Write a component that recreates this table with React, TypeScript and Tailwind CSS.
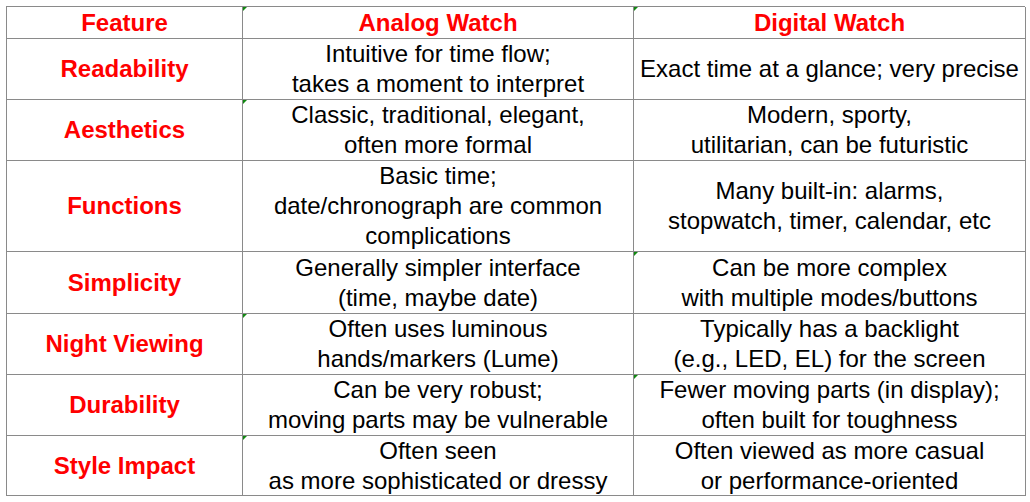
import React from 'react';

type Row = {
  feature: string;
  analog: string[];
  digital: string[];
  h: number;
  markA?: boolean;
  markD?: boolean;
};

const rows: Row[] = [
  {
    feature: 'Readability',
    analog: ['Intuitive for time flow;', 'takes a moment to interpret'],
    digital: ['Exact time at a glance; very precise'],
    h: 61,
  },
  {
    feature: 'Aesthetics',
    analog: ['Classic, traditional, elegant,', 'often more formal'],
    digital: ['Modern, sporty,', 'utilitarian, can be futuristic'],
    h: 61,
    markA: true,
  },
  {
    feature: 'Functions',
    analog: ['Basic time;', 'date/chronograph are common', 'complications'],
    digital: ['Many built-in: alarms,', 'stopwatch, timer, calendar, etc'],
    h: 91,
  },
  {
    feature: 'Simplicity',
    analog: ['Generally simpler interface', '(time, maybe date)'],
    digital: ['Can be more complex', 'with multiple modes/buttons'],
    h: 62,
    markD: true,
  },
  {
    feature: 'Night Viewing',
    analog: ['Often uses luminous', 'hands/markers (Lume)'],
    digital: ['Typically has a backlight', '(e.g., LED, EL) for the screen'],
    h: 61,
    markA: true,
  },
  {
    feature: 'Durability',
    analog: ['Can be very robust;', 'moving parts may be vulnerable'],
    digital: ['Fewer moving parts (in display);', 'often built for toughness'],
    h: 61,
    markD: true,
  },
  {
    feature: 'Style Impact',
    analog: ['Often seen', 'as more sophisticated or dressy'],
    digital: ['Often viewed as more casual', 'or performance-oriented'],
    h: 60,
    markA: true,
  },
];

// little green error triangle, like a spreadsheet
function Mark() {
  return (
    <svg className="absolute left-0 top-0" width="4" height="4" viewBox="0 0 4 4">
      <polygon points="0,0 4,0 0,4" fill="#118811" />
    </svg>
  );
}

function Cell({
  children,
  h,
  mark,
  head,
}: {
  children: React.ReactNode;
  h: number;
  mark?: boolean;
  head?: boolean;
}) {
  return (
    <div
      className={`relative flex flex-col items-center justify-center border-r border-b border-[#8a8a8a] text-center leading-[30px] text-[24px] ${
        head ? 'font-bold text-[#ff0000]' : 'text-black'
      }`}
      style={{ height: h }}
    >
      {mark && <Mark />}
      {children}
    </div>
  );
}

export default function App() {
  return (
    <div className="min-h-screen bg-white pl-[6px] pt-[6px] font-['Liberation_Sans',Arial,sans-serif]">
      <div className="grid w-[1019px] grid-cols-[236px_391px_392px] border-l border-t border-[#8a8a8a]">
        <Cell h={32} head>Feature</Cell>
        <Cell h={32} head mark>Analog Watch</Cell>
        <Cell h={32} head mark>Digital Watch</Cell>
        {rows.map((r) => (
          <React.Fragment key={r.feature}>
            <Cell h={r.h} head>{r.feature}</Cell>
            <Cell h={r.h} mark={r.markA}>
              {r.analog.map((l) => (
                <span key={l}>{l}</span>
              ))}
            </Cell>
            <Cell h={r.h} mark={r.markD}>
              {r.digital.map((l) => (
                <span key={l}>{l}</span>
              ))}
            </Cell>
          </React.Fragment>
        ))}
      </div>
    </div>
  );
}
